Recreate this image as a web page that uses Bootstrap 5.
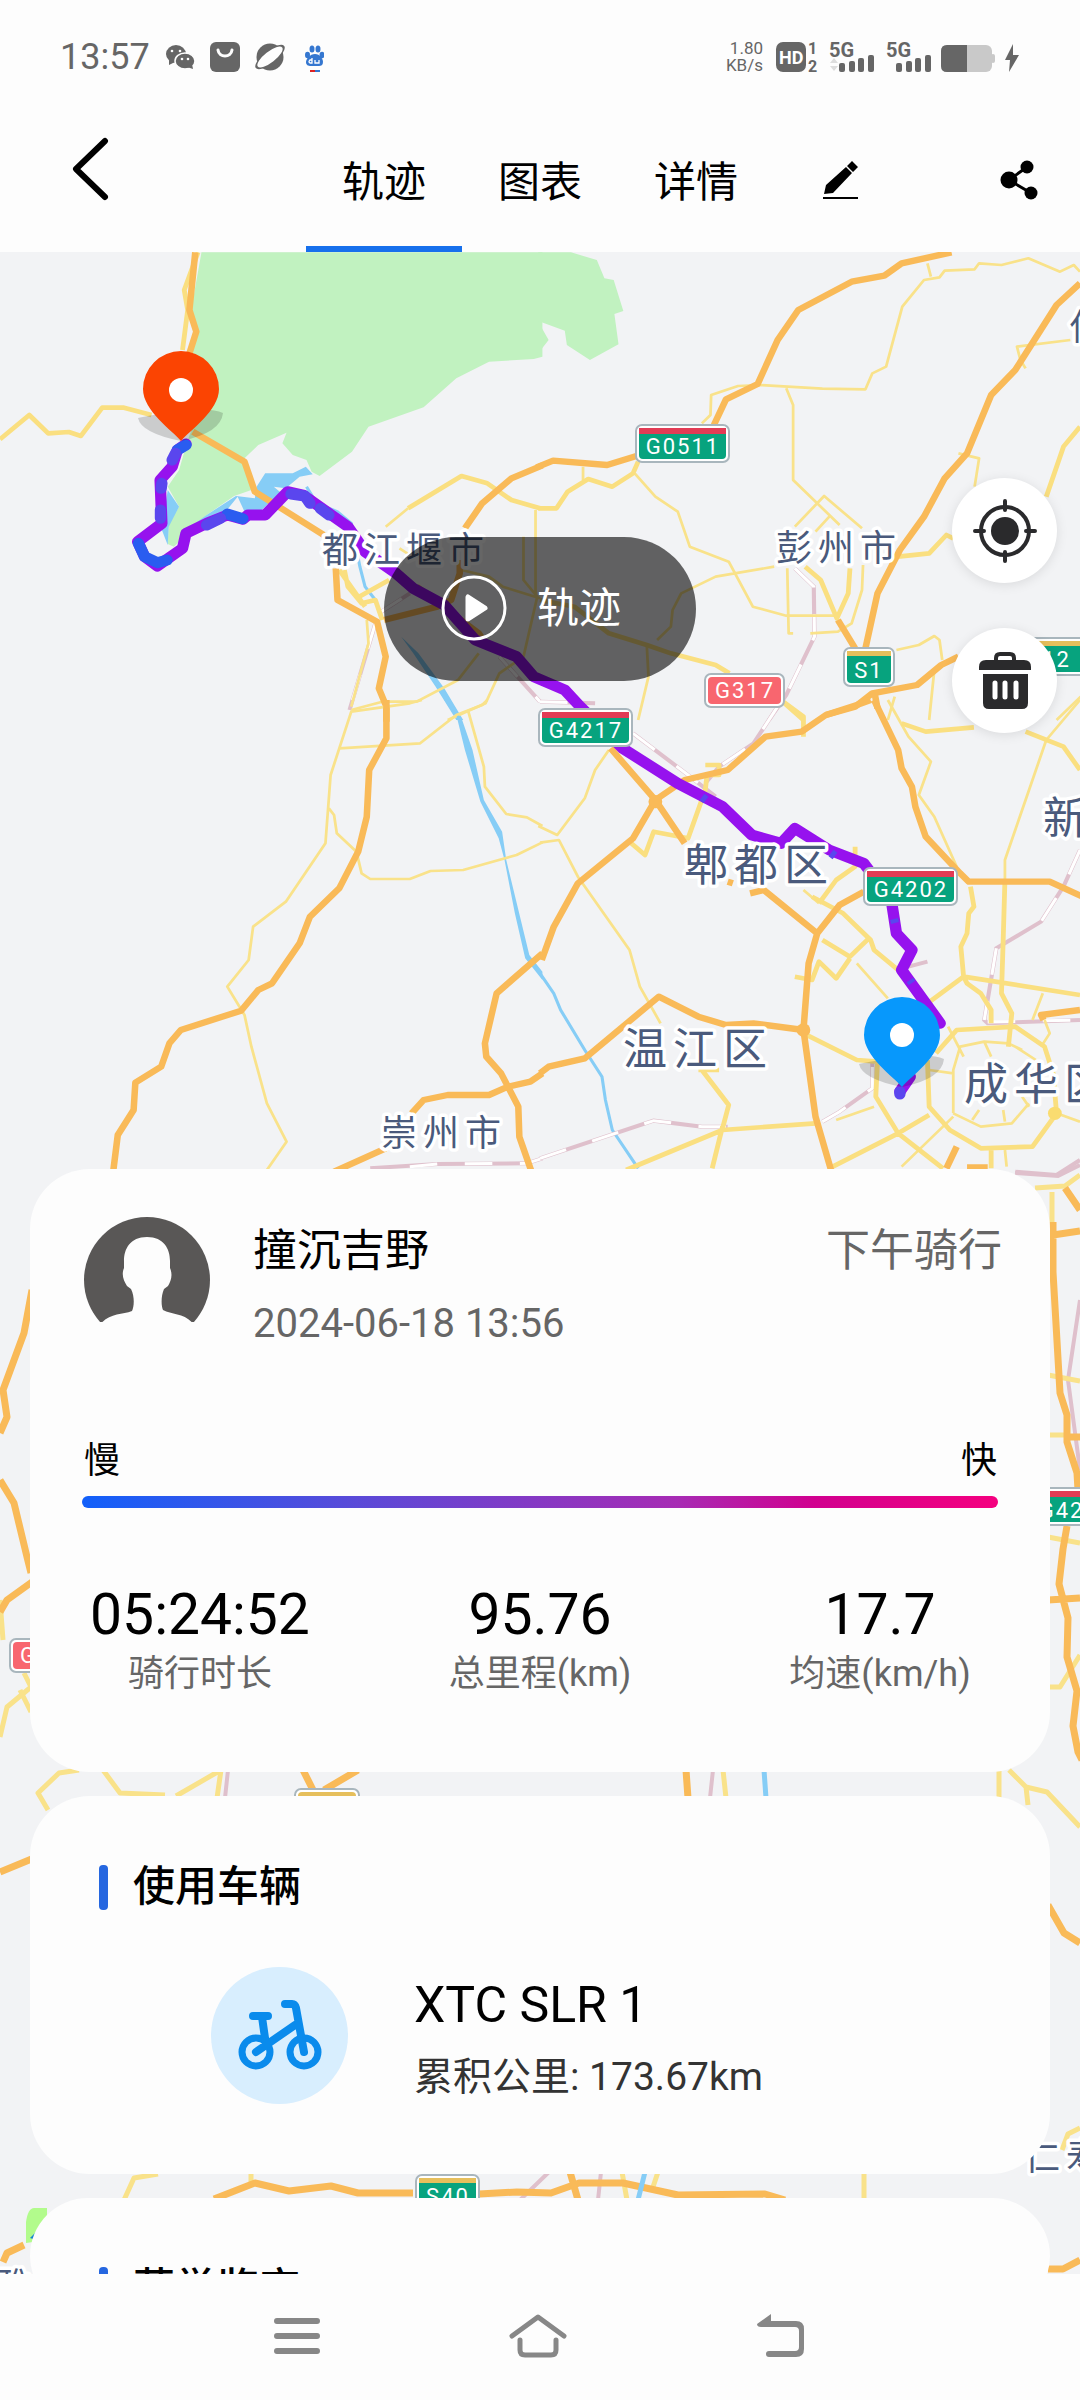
<!DOCTYPE html>
<html lang="zh-CN">
<head>
<meta charset="utf-8">
<meta name="viewport" content="width=device-width, initial-scale=1">
<title>轨迹</title>
<link href="https://cdn.jsdelivr.net/npm/bootstrap@5.3.0/dist/css/bootstrap.min.css" rel="stylesheet">
<style>
  body { height: 100vh; background: #fdfdfd; color: #000; font-family: Roboto, "Noto Sans CJK SC", sans-serif; }
  button, a { color: inherit; }
  .status-bar { height: 114px; padding: 0 60px; color: #666; }
  .clock { font-size: 36px; line-height: 40px; margin-right: 16px; }
  .net-speed { font-size: 17px; line-height: 17px; margin-right: 13px; }
  .top-bar { height: 138px; }
  .back-btn { width: 306px; padding: 0 0 28px 72px; }
  .tab-link { width: 156px; padding-top: 4px; border-bottom: 6px solid transparent; font-size: 42px; text-decoration: none; }
  .tab-link.active { border-color: #1770ec; }
  .edit-btn { width: 134px; padding: 0 0 6px; }
  .share-btn { padding: 0 42px 6px 0; }
  .icon-btn { border: 0; background: none; }
  .map-screen { min-height: 0; background: #f2f3f5; }
  .map-art { inset: 0; }
  .play-pill { top: 285px; width: 312px; height: 144px; padding: 0 18px 2px 0; border: 0; background: rgba(0,0,0,.6); color: #fff; font-size: 42px; gap: 30px; z-index: 2; }
  .map-tools { top: 226px; right: 23px; gap: 45px; z-index: 2; }
  .round-btn { width: 105px; height: 105px; border: 0; background: #fff; box-shadow: 0 2px 12px rgba(0,0,0,.1); }
  .sheet { padding: 917px 30px 0; gap: 24px; }
  .panel { border-radius: 60px; background: #fdfdfd; }
  .ride-panel { padding-top: 48px; height: 603px; }
  .ride-head { padding: 0 48px 0 54px; gap: 43px; }
  .rider { font-size: 44px; line-height: 68px; }
  .ride-date { font-size: 40px; line-height: 48px; color: #666; margin-top: 15px; }
  .ride-kind { font-size: 44px; line-height: 68px; color: #666; }
  .pace { padding: 0 52px; margin-top: 91px; font-size: 36px; line-height: 44px; }
  .pace-line { height: 12px; border-radius: 6px; margin: 13px 0 0; background: linear-gradient(90deg, #1260fa, #5a4ad8 30%, #a72bb4 65%, #d1008f 80%, #f5007f); }
  .pace-names { padding: 0 1px 0 2px; }
  .stats { margin-top: 75px; }
  .stat-value { font-size: 57px; line-height: 64px; }
  .stat-name { font-size: 36px; line-height: 54px; color: #666; }
  .panel-title { font-size: 42px; line-height: 50px; font-weight: 500; gap: 25px; padding: 66px 69px 0; }
  .panel-title::before { content: ""; width: 9px; height: 45px; border-radius: 4px; background: #2667e0; }
  .bike-panel { height: 378px; }
  .bike-row { padding: 45px 60px 0 181px; gap: 66px; }
  .bike-badge { width: 137px; height: 137px; background: #d8eefe; }
  .bike-text { padding-top: 12px; }
  .bike-name { font-size: 50px; line-height: 72px; }
  .bike-total { font-size: 39px; line-height: 72px; color: #333; }
  .sys-nav { height: 126px; padding: 0 180px 2px 180px; background: #fdfdfd; }
  .road { fill: none; stroke: #f9ba58; stroke-width: 19; stroke-linejoin: round; }
  .street { fill: none; stroke: #f9e28a; stroke-width: 8; stroke-linejoin: round; }
  .avenue { fill: none; stroke: #fadf80; stroke-width: 14; stroke-linejoin: round; }
  .rail { fill: none; stroke: #dfc0cc; stroke-width: 12; }
  .rail-gap { fill: none; stroke: #fff; stroke-width: 9; stroke-dasharray: 80 80; }
  .water-line { fill: none; stroke: #86cdf6; stroke-width: 9; }
  .edge .road { stroke-width: 7; }
  .edge .street { stroke-width: 5; }
  .edge .rail { stroke-width: 4; }
  .edge .water-line { stroke-width: 5; }
  .water { fill: #86cdf6; }
  .park { fill: #c1f2c0; }
  .track { fill: none; stroke: #9612ee; stroke-width: 33; stroke-linejoin: round; stroke-linecap: round; }
  .slow { stroke: #2a5cf0; }
  .mid { stroke: #5a46ee; }
  .place { fill: #4a5a7c; stroke: #fff; stroke-width: 7px; paint-order: stroke; stroke-linejoin: round; font-family: "Noto Sans CJK SC", sans-serif; letter-spacing: 6px; }
  .town { font-size: 36px; }
  .district { font-size: 44px; }
  .plate-text { fill: #fff; font-size: 22px; font-family: Roboto, sans-serif; text-anchor: middle; letter-spacing: 2px; }
  .plate { fill: #fff; stroke: #a9b6bd; stroke-width: 2; }
  .green { fill: #07a37e; } .crimson { fill: #e23b55; } .gold { fill: #e6bf5c; } .coral { fill: #f8666f; }
</style>
<script src="https://cdn.jsdelivr.net/npm/bootstrap@5.3.0/dist/js/bootstrap.bundle.min.js"></script>
</head>
<body class="d-flex flex-column overflow-hidden m-0">
<header class="flex-shrink-0">
  <div class="status-bar d-flex align-items-center">
    <span class="clock">13:57</span>
    <svg width="158" height="32" viewBox="167 41 158 32" aria-hidden="true">
      <g fill="#666"><ellipse cx="177" cy="54" rx="10" ry="9"/><path d="M170 60l0 5 6-3z"/><ellipse cx="186" cy="61" rx="10" ry="8" stroke="#fdfdfd" stroke-width="1.500"/><path d="M188 67l6 2-1-5z"/></g>
      <g fill="#fdfdfd"><circle cx="173" cy="51" r="1.300"/><circle cx="181" cy="51" r="1.300"/><circle cx="183" cy="59" r="1.300"/><circle cx="189" cy="59" r="1.300"/></g>
      <rect x="211" y="42" width="30" height="30" rx="6" fill="#666"/><path d="M219 50c1 8 13 8 14 0" fill="none" stroke="#fdfdfd" stroke-width="3" stroke-linecap="round"/>
      <circle cx="271" cy="57" r="13.500" fill="#666"/><ellipse cx="271" cy="57" rx="18" ry="6.500" transform="rotate(-38 271 57)" fill="#666"/><ellipse cx="271" cy="57" rx="15.500" ry="5.500" transform="rotate(-38 271 57)" fill="#fdfdfd"/>
      <g fill="#3577d0"><ellipse cx="308.500" cy="55" rx="2.500" ry="3.300"/><ellipse cx="313" cy="49" rx="2.500" ry="3.500"/><ellipse cx="319" cy="49" rx="2.500" ry="3.500"/><ellipse cx="323" cy="55" rx="2.500" ry="3.300"/><path d="M316 54c5 0 8 5 8 8s-2 4-4 4h-8c-3 0-5-1-5-4s4-8 9-8z"/><rect x="316" y="70" width="5" height="2"/></g><rect x="311" y="70" width="5" height="2" fill="#d22"/>
      <path d="M313 58v5h-2q-2-1 0-3h2M316 60v3h4v-3" fill="none" stroke="#fff" stroke-width="1.300"/>
    </svg>
    <div class="net-speed text-end ms-auto"><div>1.80</div><div>KB/s</div></div>
    <svg width="244" height="48" viewBox="777 33 244 48" fill="#666" font-family="Roboto, sans-serif" font-weight="700" aria-hidden="true">
      <rect x="777" y="42" width="30" height="30" rx="7"/><text x="780" y="64" font-size="18" fill="#fff">HD</text>
      <text x="809" y="54" font-size="16">1</text><text x="809" y="72" font-size="16">2</text>
      <text x="830" y="57" font-size="20">5G</text><text x="887" y="57" font-size="20">5G</text>
      <path d="M831 63l4-5 4 5zM831 66l4 5 4-5z" fill="#ddd"/>
      <g id="bars"><rect x="840" y="63" width="6" height="9" rx="2"/><rect x="850" y="61" width="6" height="11" rx="2"/><rect x="859" y="58" width="6" height="14" rx="2"/><rect x="869" y="55" width="6" height="17" rx="2"/></g>
      <use href="#bars" x="57"/>
      <rect x="942" y="45" width="51" height="27" rx="6" fill="#c9c9c9"/><rect x="992" y="54" width="4" height="9" rx="2" fill="#c9c9c9"/><path d="M968 45v27h-20q-6 0-6-6v-15q0-6 6-6z"/>
      <path d="M1014 44l-8 16h5l-1 12 10-17h-6z"/>
    </svg>
  </div>
  <nav class="top-bar d-flex align-items-stretch">
    <button class="icon-btn back-btn d-flex align-items-center" type="button" aria-label="返回">
      <svg width="37" height="64" viewBox="0 0 37 64"><path d="M33 4L4 32l29 28" fill="none" stroke="#000" stroke-width="6" stroke-linecap="round" stroke-linejoin="round"/></svg>
    </button>
    <a class="tab-link active d-flex align-items-center justify-content-center" href="#track">轨迹</a>
    <a class="tab-link d-flex align-items-center justify-content-center" href="#chart">图表</a>
    <a class="tab-link d-flex align-items-center justify-content-center" href="#detail">详情</a>
    <button class="icon-btn edit-btn d-flex align-items-center justify-content-center" type="button" aria-label="编辑">
      <svg width="36" height="40" viewBox="0 0 36 40"><path d="M1 34l2-9L23 7l6 6L10 33zM24 6l5-5 6 6-5 5zM0 37h35v2H0z"/></svg>
    </button>
    <button class="icon-btn share-btn ms-auto d-flex align-items-center" type="button" aria-label="分享">
      <svg width="38" height="40" viewBox="0 0 38 40"><path d="M27 7L9 20l22 13" fill="none" stroke="#000" stroke-width="3"/><circle cx="27" cy="7" r="6.500"/><circle cx="9" cy="20" r="8.500"/><circle cx="31" cy="33" r="6.500"/></svg>
    </button>
  </nav>
</header>

<main class="map-screen flex-grow-1 position-relative overflow-hidden" id="track">
  <svg class="map-art position-absolute w-100 h-100" viewBox="0 252 1080 2022" preserveAspectRatio="xMidYMin slice" role="img" aria-label="骑行轨迹地图">
    <defs>
      <g id="shade"><path d="M-43 -23Q-40 -8 0 0Q40 -8 42 -28Q30 -34 0 -30T-43 -23z" fill="#000" opacity=".16"/></g>
      <path id="drop" d="M0 0C-8 -10 -38 -30 -38 -52A38 38 0 0 1 38 -52C38 -30 8 -10 0 0z"/>
    </defs>

    <!-- north-west -->
    <g transform="translate(0 240) scale(.344388 .333333)">
      <path class="park" d="M585 37H1575V350L1550 357 1420 365 1325 415 1230 502 1070 560 1022 635 928 708 905 695 890 660 850 645 820 610 832 578 750 615 710 655 730 750 680 768 600 825 545 880 505 920 487 912 490 850 520 800 487 740 520 690 545 600 560 560 550 340 575 270 555 210z"/>
      <path class="water" d="M745 740L770 700H850L888 680 908 703 870 710 830 745 795 740 830 770 780 790 760 810 710 815 690 770 655 815 550 890 540 870 600 825 685 768 740 775zM487 750L520 800 490 860 487 915 470 870z"/>
      <path class="water-line" d="M890 740L920 790 980 815 1020 850 1030 900 1045 980 1060 1040 1090 1080"/>
      <path class="water" d="M1165 1190L1215 1240 1290 1345 1345 1440H1325L1265 1340 1200 1240z"/>
      <path class="rail" d="M1090 1150L1015 1410M1100 1120L1190 1060M1450 1250L1568 1385"/><path class="rail-gap" d="M1090 1150L1015 1410M1100 1120L1190 1060M1450 1250L1568 1385"/>
      <path class="avenue" d="M0 598L85 525 140 580 200 576 235 588 297 503H360L440 525M575 37L535 150 545 210 530 330M1185 805L1340 708 1415 730 1485 780 1568 805M1000 990L1010 1040 1050 1090 1090 1080 1110 1140M1035 1075L1130 1020M985 990L1060 1100"/>
      <path class="street" d="M1120 860L1185 805M1555 810V1070M1160 925L1190 945M1340 990L1420 1010 1460 1040 1568 1075M1520 890V1020L1560 1070 1520 1250 1450 1300 1410 1390 1300 1440M1020 1410L1110 1385H1210L1330 1320 1390 1240M1065 1140L1070 1210 1020 1400"/>
      <path class="road" d="M567 37L550 210 570 275 550 340M560 575L710 665 740 755 940 885M975 985L980 1080 1095 1145 1120 1250 1100 1345 1122 1400V1445M1115 1140L1270 1100 1310 1080 1335 1000V960M1575 676L1485 715 1400 790 1350 865M1210 1040L1390 1180 1410 1210"/>
    </g>
    <!-- north-east -->
    <g transform="translate(540 240) scale(.344388 .333333)">
      <path class="park" d="M-5 37H90L165 60 187 115 214 120 242 213 216 222 228 313 145 360 78 315 72 272 -5 243zM-5 245L25 300 -5 340z"/>
      <path class="rail" d="M740 985L795 1040 797 1190 715 1365 665 1440M0 1385L160 1390"/><path class="rail-gap" d="M740 985L795 1040 797 1190 715 1365 665 1440M0 1385L160 1390"/>
      <path class="street" d="M1125 70L1135 110M1568 95L1550 75 1510 95 1418 55 1340 75 1275 70 1262 88 1175 92 1160 112 1115 120 1052 200 1005 380 965 400 945 448 820 446 640 435 575 438 497 465 495 525 470 550M715 445L735 495V720L870 855M740 860L825 768 935 865M800 875L840 830M1540 300L1385 320 1395 360 1410 385M1215 640L1275 655 1262 740M125 680V720M275 700L335 770 400 815 435 920 548 965 618 1100 715 1127H860M680 980L510 1010 410 1060 385 1110 380 1160 340 1200M718 985L722 1180H735M938 975L935 1050 905 1150 865 1175 785 1180M1035 1230L1100 1215 1145 1188 1160 1200 1168 1260M1145 1290L1130 1440M1570 1370L1500 1440M1030 1370L1010 1440M310 1215L315 1310 285 1440"/>
      <path class="avenue" d="M1568 560L1520 620 1470 770M-5 805H48L80 755 140 717 210 740 270 700 285 665M770 980L815 1020 862 1135 895 1060 900 985M1040 950L1130 940 1180 885 1200 895M0 1080L100 1100 200 1180 310 1215 380 1240 510 1275 550 1300M710 1390L765 1440"/>
      <path class="road" d="M1195 37L1050 70 1000 107 905 125 750 210 690 300 632 432 540 478 505 555M280 648L195 675 38 662 -10 682M1568 130L1500 195 1380 390 1310 465 1240 640 1175 715 1115 830 1045 930 980 1060 945 1225M865 1140L915 1225M1215 1250L1165 1275 1095 1335 965 1360 915 1400 830 1425M970 1350L980 1405"/>
    </g>
    <!-- south-west -->
    <g transform="translate(0 700) scale(.344388 .333333)">
      <path class="water" d="M1290 0L1325 45 1350 150 1395 305 1448 415 1465 480 1495 640 1525 775 1575 840V815L1537 765 1470 480 1458 395 1405 300 1372 150 1342 60 1305 0z"/>
      <path class="rail" d="M1075 1405L1270 1392 1530 1390 1575 1375"/><path class="rail-gap" d="M1190 1400L1270 1392 1530 1390 1575 1375"/>
      <path class="street" d="M1225 0L1190 10 1020 35 960 225 945 430 830 605 735 680 722 780 660 860 710 945 730 1040 775 1210 832 1325 775 1410M985 145L1220 130 1325 45 1400 15 1415 0M1360 35L1405 200 1408 260 1470 342 1530 352 1575 378M955 325L970 345 978 400 1035 455 1050 520 1075 537H1190L1250 513 1345 510 1500 465 1575 427"/>
      <path class="road" d="M1122 0V115L1072 210 1065 350 1040 455 985 565 900 650 870 730 790 850 750 870 700 932 525 990 492 1030 468 1100 393 1148 388 1230 342 1305 328 1420M1575 760L1442 880 1408 1030 1412 1070 1455 1120 1475 1160 1505 1220 1508 1310 1545 1420M1575 1120L1540 1145 1475 1160 1420 1185H1300L1230 1200 1195 1240M1120 1345L970 1415"/>
    </g>
    <!-- south-east -->
    <g transform="translate(540 700) scale(.344388 .333333)">
      <path class="water-line" d="M0 820L40 880 60 930 130 1050 180 1130 190 1200 210 1290 285 1405"/>
      <path class="rail" d="M270 100L430 225 510 290M690 20L620 130 520 200 480 250M0 1375L330 1262 470 1280H545M820 1265L870 1235 965 1165V1085M1070 800L1125 785M1380 1415L1500 1425 1568 1380M1568 450L1520 560 1455 665 1325 745 1290 960 1300 970 1568 960"/>
      <path class="rail-gap" d="M270 100L430 225 510 290M690 20L620 130 520 200 480 250M0 1375L330 1262 470 1280H545M820 1265L870 1235 965 1165V1085M1568 450L1520 560 1455 665M1325 745L1290 960M1300 966L1568 960"/>
      <path class="street" d="M-5 378L50 405 130 295 160 210 200 150M0 428L55 420 110 530 260 750 290 860 350 970M1010 0L1070 110 1135 185 1100 285 1145 350 1210 500M1568 0L1470 120 1420 270 1350 480V540M765 570L810 610M920 790L1010 895M1200 1240V1110L1220 1040 1290 1025 1360 1030 1400 1050M1200 1240L1280 1280 1370 1270 1420 1210M1185 980L1230 1070M1290 1025L1310 1070M1380 1040L1440 1080M1500 1240L1568 1265M1460 880L1430 960M1465 960L1480 1000 1455 1040M1050 1400L1200 1250M860 1260L970 1220M1130 1110L1200 1120M1350 1350L1355 1400M1255 1260L1275 1230M1345 1230L1350 1265M1400 1190L1420 1220"/>
      <path class="avenue" d="M765 1000L920 1080 980 1085 975 1190 1040 1300 1170 1405M1125 910L1230 830 1568 885M1250 560L1260 620 1245 640 1240 700 1222 740 1230 830 1240 850 1280 880 1310 930V970M1350 540L1345 720 1340 880 1370 940 1360 1040M1150 1060L1210 990 1380 980 1465 1040 1490 1120 1500 1240 1430 1340 1280 1345 1190 1290 1130 1220 1125 1080M250 1410L530 1290 800 1270M530 1280L500 1405M460 1110H520M470 1110L548 1215 530 1285M850 1400L1040 1300 1130 1245M1050 70L1120 95 1260 82M1410 95L1520 140 1568 210M700 0L765 50V110M480 195H520V225H485L480 270 430 415 330 395 305 465 265 430M810 610L860 540 915 500V440M790 590L880 640 960 720 970 750 1040 810M820 720L900 770 955 715M740 830L790 840 810 785 860 835 900 775M1310 1350V1405"/>
      <path class="road" d="M960 0L920 15 830 45 760 95 655 110 545 210 420 240 335 300 270 415 110 550 40 680 5 780M205 145L335 300 420 430M545 545L560 550M610 580L650 570 805 700 870 615 940 575M970 0L1040 150 1050 205 1080 260 1090 320 1120 410 1220 520 1245 545H1480L1575 590M805 700L780 790 765 990 800 1250 845 1410M0 1120L25 1100 130 1075 345 890 460 950 540 975 620 970 765 990M1568 930L1455 945 1462 960M1210 1340L1180 1405M1240 1402H1300"/>
      <circle cx="335" cy="305" r="20" fill="#f9ba58"/><circle cx="765" cy="990" r="20" fill="#f9ba58"/><circle cx="1495" cy="1240" r="20" fill="#fadc70"/>
    </g>
    <!-- strips beside and between the panels -->
    <g class="edge">
      <path class="rail" d="M1015 1173L1058 1176 1080 1165M1080 1300L1068 1380 1080 1470M228 1770L225 1798M713 1770L710 1798M549 2172L520 2200M601 2172L598 2200"/>
      <path class="street" d="M1035 1188L1065 1186 1080 1175M1052 1192V1222M1048 1375L1080 1381M1048 1435H1065M1048 1537L1080 1543M1048 1687H1060L1080 1655M0 1600L3 1640M24 1673L31 1687 7 1707 0 1737M20 1690L31 1712M79 1770L59 1773 38 1793 48 1810M103 1770L120 1793 165 1795M221 1770L176 1796M221 1770L217 1798M723 1770L726 1798M999 1770V1798M1009 1770L1026 1787 1047 1792 1080 1827M1026 1787L1028 1805M158 2174L134 2178 124 2200M251 2172V2186M622 2172L627 2200M658 2172L652 2190M864 2172V2200M1080 2128L1068 2134 1062 2150"/>
      <path class="road" d="M1053 1222V1272L1060 1393 1067 1415V1442L1077 1473 1078 1490M1053 1235L1080 1231M1067 1437H1080M1065 1188L1080 1210M1067 1526L1063 1549 1059 1584 1068 1618 1067 1657 1077 1691 1073 1726 1078 1752 1082 1760M1048 1600L1080 1598M32 1290L24 1333 3 1390 7 1417 0 1433M0 1480L14 1503 27 1557 31 1573M32 1582L7 1600 0 1612M303 1770L313 1790M358 1770L324 1790M686 1770L688 1798M0 1872L34 1858M1048 1905L1064 1933 1080 1943M214 2199L255 2183 289 2191 331 2186 358 2193H413M479 2194L517 2192 551 2193 579 2183H623L678 2195 765 2194 785 2200M570 2172L578 2200M3 2262L7 2253 24 2245M1048 2269H1063L1080 2260"/>
      <path class="water-line" d="M764 1770L766 1798M645 2172L638 2200"/>
      <path d="M26 2222Q28 2208 34 2208H47V2240L26 2243z" fill="#b2fb8c"/><path d="M30 2238l6-6v8z" fill="#1683d0"/>
    </g>

    <!-- recorded ride -->
    <g transform="translate(0 240) scale(.344388 .333333)">
      <path class="track" d="M540 612L515 630 500 680 465 720 470 850 400 905 420 950 457 978 530 925 540 880 600 850 660 825 705 838 720 825H770L835 755 880 765 1010 860 1060 935 1150 1000 1200 1045 1290 1095 1380 1200 1500 1250 1550 1310 1640 1350 1685 1400 1808 1525 1968 1630 2098 1700 2183 1785 2268 1810 2308 1765 2408 1830 2508 1870 2588 1980 2603 2080 2648 2130 2618 2190 2730 2350M2643 2510L2613 2555"/>
      <path class="track slow" d="M540 615L515 630M402 910L420 950 457 968 485 960M660 822L705 836"/>
      <path class="track mid" d="M510 640L500 660M470 730L468 745M466 810V835M600 855L640 835M845 762L885 768 900 790M930 805L955 825M2613 2555V2562"/>
    </g>
    <path d="M702 797l4 3M831 853l4 3M894 919l1 4M910 980l2 3" stroke="#5a46ee" stroke-width="8" fill="none"/>

    <g class="place town">
      <text x="322" y="563">都江堰市</text><text x="776" y="561">彭州市</text><text x="381" y="1146">崇州市</text>
      <text x="1069" y="340">什</text><text x="1024" y="2170">仁寿</text><text x="-6" y="2299">雅</text>
    </g>
    <g class="place district">
      <text x="684" y="881">郫都区</text><text x="623" y="1065">温江区</text><text x="964" y="1100">成华区</text><text x="1043" y="834">新</text>
    </g>

    <g>
      <rect class="plate" x="636" y="425" width="93" height="37" rx="6"/><rect class="green" x="639" y="428" width="87" height="31" rx="4"/><rect class="crimson" x="639" y="428" width="87" height="6"/><text class="plate-text" x="683" y="454">G0511</text>
      <rect class="plate" x="539" y="709" width="93" height="37" rx="6"/><rect class="green" x="542" y="712" width="87" height="31" rx="4"/><rect class="crimson" x="542" y="712" width="87" height="6"/><text class="plate-text" x="586" y="738">G4217</text>
      <rect class="plate" x="864" y="868" width="93" height="37" rx="6"/><rect class="green" x="867" y="871" width="87" height="31" rx="4"/><rect class="crimson" x="867" y="871" width="87" height="6"/><text class="plate-text" x="911" y="897">G4202</text>
      <rect class="plate" x="1014" y="1488" width="93" height="37" rx="6"/><rect class="green" x="1017" y="1491" width="87" height="31" rx="4"/><rect class="crimson" x="1017" y="1491" width="87" height="6"/><text class="plate-text" x="1076" y="1518">G4202</text>
      <rect class="plate" x="844" y="648" width="50" height="38" rx="6"/><rect class="green" x="847" y="651" width="44" height="32" rx="4"/><rect class="gold" x="847" y="651" width="44" height="5"/><text class="plate-text" x="869" y="678">S1</text>
      <rect class="plate" x="1020" y="638" width="74" height="37" rx="6"/><rect class="green" x="1023" y="641" width="68" height="31" rx="4"/><rect class="gold" x="1023" y="641" width="68" height="5"/><text class="plate-text" x="1049" y="667">S12</text>
      <rect class="plate" x="705" y="674" width="79" height="33" rx="6"/><rect class="coral" x="708" y="677" width="73" height="27" rx="4"/><text class="plate-text" x="745" y="698">G317</text>
      <rect class="plate" x="10" y="1639" width="79" height="33" rx="6"/><rect class="coral" x="13" y="1642" width="73" height="27" rx="4"/><text class="plate-text" x="50" y="1663">G318</text>
      <rect class="plate" x="295" y="1789" width="64" height="37" rx="6"/><rect class="gold" x="298" y="1792" width="58" height="31" rx="4"/>
      <rect class="plate" x="416" y="2175" width="63" height="37" rx="6"/><rect class="green" x="419" y="2178" width="57" height="31" rx="4"/><rect class="gold" x="419" y="2178" width="57" height="5"/><text class="plate-text" x="448" y="2204">S40</text>
    </g>

    <g transform="translate(181 441)"><use href="#shade"/><use href="#drop" fill="#fb4402"/><circle cy="-51" r="12" fill="#fff"/></g>
    <g transform="translate(902 1087)"><use href="#shade"/><use href="#drop" fill="#0798fc"/><circle cy="-52" r="12" fill="#fff"/></g>
  </svg>

  <button class="play-pill position-absolute start-50 translate-middle-x rounded-pill d-flex align-items-center justify-content-center" type="button">
    <svg width="66" height="66" viewBox="0 0 66 66"><circle cx="33" cy="33" r="31" fill="none" stroke="#fff" stroke-width="3"/><path d="M27 22v22l17-11z" fill="#fff" stroke="#fff" stroke-width="5" stroke-linejoin="round"/></svg>
    轨迹
  </button>
  <div class="map-tools position-absolute d-flex flex-column">
    <button class="round-btn rounded-circle d-flex align-items-center justify-content-center p-0" type="button" aria-label="定位">
      <svg width="66" height="66" viewBox="0 0 66 66"><g fill="none" stroke="#2a2a2c" stroke-width="4" stroke-linecap="round"><circle cx="33" cy="33" r="24"/><path d="M33 3v9M33 54v9M3 33h9M54 33h9"/></g><circle cx="33" cy="33" r="14" fill="#2a2a2c"/></svg>
    </button>
    <button class="round-btn rounded-circle d-flex align-items-center justify-content-center p-0" type="button" aria-label="删除">
      <svg width="54" height="58" viewBox="0 0 54 58"><path d="M18 9V6q0-4 4-4h10q4 0 4 4v3" fill="none" stroke="#2a2a2c" stroke-width="4"/><path d="M1 18v-3q0-7 7-7h38q7 0 7 7v3zM5 22h45v29q0 6-6 6H11q-6 0-6-6z" fill="#2a2a2c"/><path d="M17 31v14M27 31v14M38 31v14" stroke="#fff" stroke-width="5" stroke-linecap="round"/></svg>
    </button>
  </div>

  <div class="sheet position-relative d-flex flex-column">
    <section class="panel ride-panel">
      <div class="ride-head d-flex align-items-start">
        <svg class="flex-shrink-0" width="126" height="105" viewBox="0 0 126 105" role="img" aria-label="头像"><circle cx="63" cy="63" r="63" fill="#595756"/><path d="M63 20c-17 0-23 12-23 24v7c-3 7 0 13 3 18l4 3c4 8 3 18 1 22-10 4-24 2-32 14l8 22h78l8-22c-8-12-22-10-31-15-2-5-2-14 1-21l4-3c3-5 5-11 2-18v-7c0-12-6-24-23-24z" fill="#fdfdfd"/></svg>
        <div>
          <div class="rider">撞沉吉野</div>
          <div class="ride-date">2024-06-18 13:56</div>
        </div>
        <div class="ride-kind ms-auto">下午骑行</div>
      </div>
      <div class="pace">
        <div class="pace-names d-flex justify-content-between"><span>慢</span><span>快</span></div>
        <div class="pace-line"></div>
      </div>
      <div class="stats row g-0 text-center">
        <div class="col-4"><div class="stat-value">05:24:52</div><div class="stat-name">骑行时长</div></div>
        <div class="col-4"><div class="stat-value">95.76</div><div class="stat-name">总里程(km)</div></div>
        <div class="col-4"><div class="stat-value">17.7</div><div class="stat-name">均速(km/h)</div></div>
      </div>
    </section>
    <section class="panel bike-panel">
      <h2 class="panel-title d-flex align-items-center m-0">使用车辆</h2>
      <div class="bike-row d-flex align-items-center">
        <div class="bike-badge rounded-circle d-flex align-items-center justify-content-center flex-shrink-0">
          <svg width="84" height="72" viewBox="0 0 84 72" fill="none" stroke="#0a8bec" stroke-linecap="round" stroke-linejoin="round"><circle cx="18" cy="53" r="14" stroke-width="7"/><circle cx="66" cy="53" r="14" stroke-width="7"/><path d="M47 5h7q3 0 4 4l8 44M57 26L18 53M15 17h15M24 18l4 28" stroke-width="8"/></svg>
        </div>
        <div class="bike-text">
          <div class="bike-name">XTC SLR 1</div>
          <div class="bike-total">累积公里: 173.67km</div>
        </div>
      </div>
    </section>
    <section class="panel">
      <h2 class="panel-title d-flex align-items-center m-0">荣誉鉴定</h2>
    </section>
  </div>
</main>

<footer class="sys-nav flex-shrink-0 d-flex align-items-center justify-content-around">
  <button class="icon-btn" type="button" aria-label="菜单"><svg width="46" height="38" viewBox="0 0 46 38"><path d="M3 4h40M3 19h40M3 34h40" stroke="#878787" stroke-width="6" stroke-linecap="round"/></svg></button>
  <button class="icon-btn" type="button" aria-label="主页"><svg width="58" height="44" viewBox="0 0 58 44"><path d="M3 22L29 3l26 19M11 26v10q0 5 5 5h26q5 0 5-5V26" fill="none" stroke="#878787" stroke-width="5" stroke-linecap="round" stroke-linejoin="round"/></svg></button>
  <button class="icon-btn" type="button" aria-label="返回上一页"><svg width="50" height="44" viewBox="0 0 50 44"><path d="M1 10L15 0v7h25q8 0 8 8v20q0 8-8 8H13q-3 0-3-3t3-3h26q4 0 4-4V17q0-4-4-4H5q-4 0-4-3z" fill="#878787"/></svg></button>
</footer>
</body>
</html>
